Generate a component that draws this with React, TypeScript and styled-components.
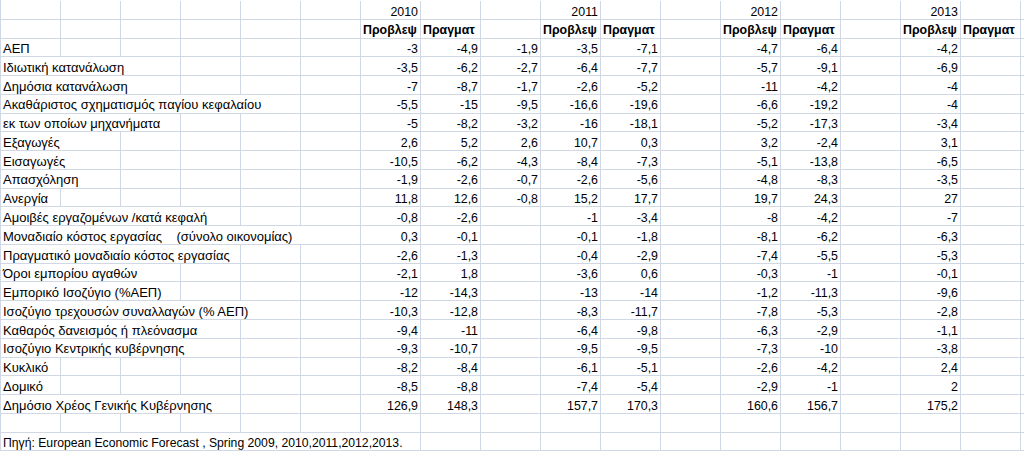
import { FC } from 'react';
import styled, { createGlobalStyle } from 'styled-components';

const GlobalStyle = createGlobalStyle`
  html,
  body {
    margin: 0;
    background-color: #fff;
    overflow: hidden;
  }
`;

const COLS = 18;
const ROW_HEIGHT = 18.77;

const Sheet = styled.div`
  display: grid;
  grid-template-columns: repeat(${COLS - 1}, 60px) 3px;
  grid-auto-rows: ${ROW_HEIGHT}px;
  width: max-content;
  padding-top: 1px;
  border-left: 1px solid #d0d7e5;
  font-family: 'Liberation Sans', Arial, sans-serif;
  color: #000;
`;

type Kind = 'label' | 'value' | 'head' | 'note';

const fontSizes: Record<Kind, string> = {
  label: '13px',
  value: '12.4px',
  head: '12.4px',
  note: '12.2px',
};

type TCell = {
  $span?: number;
  $kind: Kind;
  $bold?: boolean;
};
const Cell = styled.div<TCell>`
  grid-column: span ${({ $span }) => $span ?? 1};
  display: flex;
  align-items: flex-end;
  justify-content: ${({ $kind }) => ($kind === 'value' ? 'flex-end' : 'flex-start')};
  padding: 0 2px;
  border-right: 1px solid #d0d7e5;
  border-bottom: 1px solid #d0d7e5;
  font-size: ${({ $kind }) => fontSizes[$kind]};
  font-weight: ${({ $bold }) => ($bold ? 700 : 400)};
  line-height: 14.2px;
  white-space: pre;
  overflow: visible;
  min-width: 0;
`;

type CellDef = {
  text: string;
  kind?: Kind;
  span?: number;
  bold?: boolean;
};

// data columns: 2010 (6, 7), extra (8), 2011 (9, 10), 2012 (12, 13), 2013 (15)
const VALUE_COLS = [6, 7, 8, 9, 10, 12, 13, 15];

type DataRow = {
  label: string;
  span: number;
  values: string[];
};

const rows: DataRow[] = [
  { label: 'ΑΕΠ', span: 1, values: ['-3', '-4,9', '-1,9', '-3,5', '-7,1', '-4,7', '-6,4', '-4,2'] },
  { label: 'Ιδιωτική κατανάλωση', span: 3, values: ['-3,5', '-6,2', '-2,7', '-6,4', '-7,7', '-5,7', '-9,1', '-6,9'] },
  { label: 'Δημόσια κατανάλωση', span: 3, values: ['-7', '-8,7', '-1,7', '-2,6', '-5,2', '-11', '-4,2', '-4'] },
  {
    label: 'Ακαθάριστος σχηματισμός παγίου κεφαλαίου',
    span: 5,
    values: ['-5,5', '-15', '-9,5', '-16,6', '-19,6', '-6,6', '-19,2', '-4'],
  },
  { label: 'εκ των οποίων μηχανήματα', span: 3, values: ['-5', '-8,2', '-3,2', '-16', '-18,1', '-5,2', '-17,3', '-3,4'] },
  { label: 'Εξαγωγές', span: 2, values: ['2,6', '5,2', '2,6', '10,7', '0,3', '3,2', '-2,4', '3,1'] },
  { label: 'Εισαγωγές', span: 2, values: ['-10,5', '-6,2', '-4,3', '-8,4', '-7,3', '-5,1', '-13,8', '-6,5'] },
  { label: 'Απασχόληση', span: 2, values: ['-1,9', '-2,6', '-0,7', '-2,6', '-5,6', '-4,8', '-8,3', '-3,5'] },
  { label: 'Ανεργία', span: 1, values: ['11,8', '12,6', '-0,8', '15,2', '17,7', '19,7', '24,3', '27'] },
  { label: 'Αμοιβές εργαζομένων /κατά κεφαλή', span: 4, values: ['-0,8', '-2,6', '', '-1', '-3,4', '-8', '-4,2', '-7'] },
  {
    label: 'Μοναδιαίο κόστος εργασίας    (σύνολο οικονομίας)',
    span: 6,
    values: ['0,3', '-0,1', '', '-0,1', '-1,8', '-8,1', '-6,2', '-6,3'],
  },
  {
    label: 'Πραγματικό μοναδιαίο κόστος εργασίας',
    span: 4,
    values: ['-2,6', '-1,3', '', '-0,4', '-2,9', '-7,4', '-5,5', '-5,3'],
  },
  { label: 'Όροι εμπορίου αγαθών', span: 3, values: ['-2,1', '1,8', '', '-3,6', '0,6', '-0,3', '-1', '-0,1'] },
  { label: 'Εμπορικό Ισοζύγιο (%ΑΕΠ)', span: 3, values: ['-12', '-14,3', '', '-13', '-14', '-1,2', '-11,3', '-9,6'] },
  {
    label: 'Ισοζύγιο τρεχουσών συναλλαγών (% ΑΕΠ)',
    span: 5,
    values: ['-10,3', '-12,8', '', '-8,3', '-11,7', '-7,8', '-5,3', '-2,8'],
  },
  { label: 'Καθαρός δανεισμός ή πλεόνασμα', span: 4, values: ['-9,4', '-11', '', '-6,4', '-9,8', '-6,3', '-2,9', '-1,1'] },
  { label: 'Ισοζύγιο Κεντρικής κυβέρνησης', span: 4, values: ['-9,3', '-10,7', '', '-9,5', '-9,5', '-7,3', '-10', '-3,8'] },
  { label: 'Κυκλικό', span: 1, values: ['-8,2', '-8,4', '', '-6,1', '-5,1', '-2,6', '-4,2', '2,4'] },
  { label: 'Δομικό', span: 1, values: ['-8,5', '-8,8', '', '-7,4', '-5,4', '-2,9', '-1', '2'] },
  {
    label: 'Δημόσιο Χρέος Γενικής Κυβέρνησης',
    span: 4,
    values: ['126,9', '148,3', '', '157,7', '170,3', '160,6', '156,7', '175,2'],
  },
];

// turns a sparse column map into cells, skipping columns covered by a span
const buildRow = (map: Record<number, CellDef>): CellDef[] => {
  const cells: CellDef[] = [];
  let col = 0;
  while (col < COLS) {
    const def = map[col] ?? { text: '' };
    cells.push(def);
    col += def.span ?? 1;
  }
  return cells;
};

const years = ['2010', '2011', '2012', '2013'];

const yearRow = buildRow(
  Object.fromEntries(years.map((y, i) => [6 + i * 3, { text: y, kind: 'value' as const }])),
);

const captionRow = buildRow(
  Object.fromEntries(
    [6, 7, 9, 10, 12, 13, 15, 16].map((col, i) => [
      col,
      { text: i % 2 === 0 ? 'Προβλεψ' : 'Πραγματ', kind: 'head' as const, bold: true },
    ]),
  ),
);

const dataRows = rows.map((row) => {
  const map: Record<number, CellDef> = { 0: { text: row.label, kind: 'label', span: row.span } };
  row.values.forEach((value, i) => {
    map[VALUE_COLS[i]] = { text: value, kind: 'value' };
  });
  return buildRow(map);
});

const emptyRow = buildRow({});

const sourceRow = buildRow({
  0: {
    text: 'Πηγή: European Economic Forecast , Spring 2009, 2010,2011,2012,2013.',
    kind: 'note',
    span: 7,
  },
});

const allRows = [yearRow, captionRow, ...dataRows, emptyRow, sourceRow];

const App: FC = () => (
  <>
    <GlobalStyle />
    <Sheet>
      {allRows.map((cells, r) =>
        cells.map((cell, c) => (
          <Cell key={`${r}-${c}`} $span={cell.span} $kind={cell.kind ?? 'value'} $bold={cell.bold}>
            {cell.text}
          </Cell>
        )),
      )}
    </Sheet>
  </>
);

export default App;
